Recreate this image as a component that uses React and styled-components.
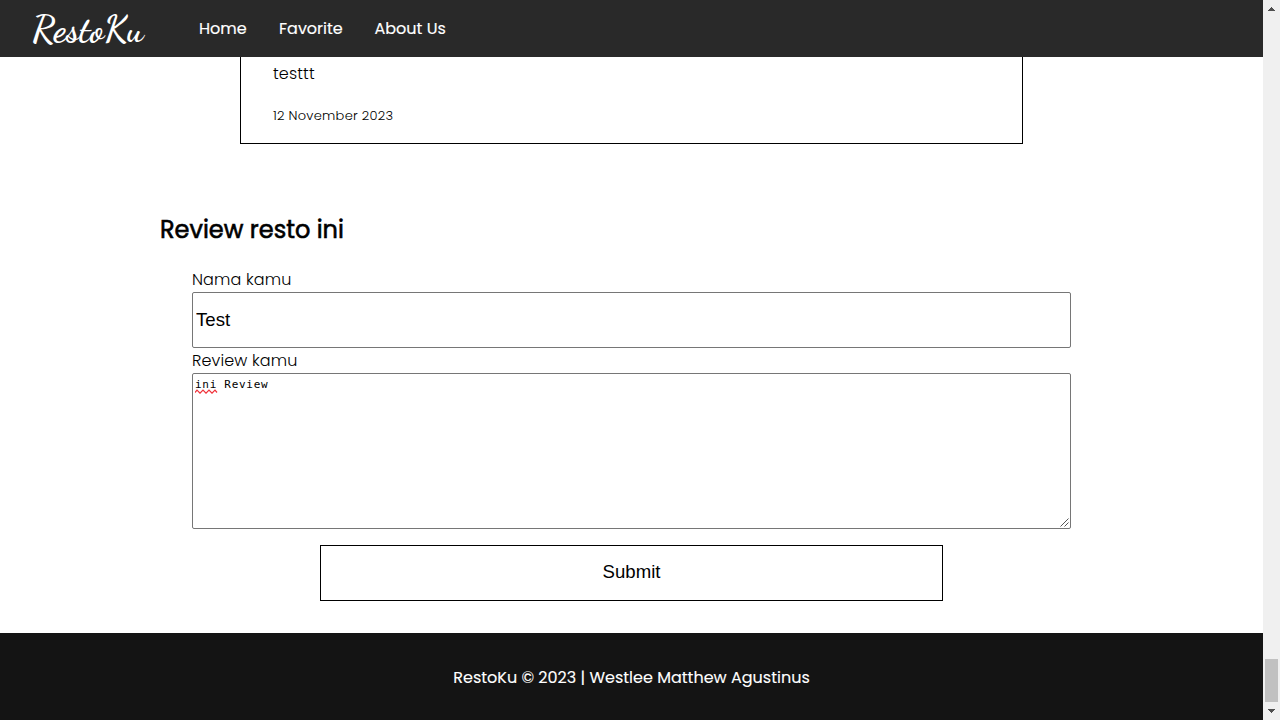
import React from 'react';
import styled, { createGlobalStyle } from 'styled-components';

const GlobalStyle = createGlobalStyle`
  * { box-sizing: border-box; }
  body {
    margin: 0;
    background: #fff;
    color: #000;
    font-family: Poppins, Inter, sans-serif;
    font-size: 16px;
    line-height: 24px;
    overflow: hidden;
  }
`;

const Window = styled.div`
  display: flex;
  width: 1280px;
  height: 720px;
  overflow: hidden;
`;

const Page = styled.div`
  display: flex;
  flex-direction: column;
  width: 1263px;
  height: 720px;
`;

const Header = styled.header`
  display: flex;
  align-items: center;
  flex: none;
  height: 57px;
  padding-left: 32px;
  background: #292929;
  color: #fff;
`;

const Logo = styled.div`
  width: 167px;
  font-family: 'Dancing Script', 'Liberation Serif', serif;
  font-weight: 700;
  font-size: 37px;
  line-height: 56px;
  white-space: nowrap;
`;

const Nav = styled.nav`
  display: flex;
`;

const NavLink = styled.a`
  width: ${(p) => p.$width}px;
  font-weight: 400;
  -webkit-text-stroke: 0.15px currentColor;
  white-space: nowrap;
`;

const Main = styled.main`
  flex: 1;
  min-height: 0;
`;

const ReviewCard = styled.article`
  width: 783px;
  height: 87px;
  margin-left: 240px;
  padding: 5px 32px 0;
  border: 1px solid #000;
  border-top: 0;
`;

const ReviewText = styled.p`
  margin: 0;
  font-weight: 300;
  letter-spacing: 0.15px;
`;

const ReviewDate = styled.p`
  margin: 20px 0 0;
  font-size: 13px;
  line-height: 20px;
  font-weight: 300;
  letter-spacing: 0.26px;
`;

const Title = styled.h2`
  margin: 68px 0 0 160px;
  font-size: 24px;
  line-height: 36px;
  font-weight: 400;
  -webkit-text-stroke: 0.6px currentColor;
`;

const Form = styled.form`
  display: flex;
  flex-direction: column;
  margin: 20px 192px 0;
`;

const Label = styled.label`
  height: 24px;
  font-weight: 300;
  letter-spacing: 0.13px;
`;

const NameInput = styled.input`
  height: 56px;
  margin: 0 0 1px;
  padding: 1px 3px;
  border: 1px solid #767676;
  border-radius: 2px;
  outline: 0;
  color: #000;
  font: 18.6px 'Liberation Sans', Arial, sans-serif;
`;

const ReviewField = styled.div`
  position: relative;
  display: flex;
  height: 156px;
`;

const ReviewInput = styled.textarea`
  flex: 1;
  padding: 3px 2px 2px;
  border: 1px solid #767676;
  border-radius: 2px;
  outline: 0;
  resize: none;
  color: #000;
  font: 11px/15px 'DejaVu Sans Mono', monospace;
  letter-spacing: 0.71px;
`;

const Squiggle = styled.svg`
  position: absolute;
  left: 3px;
  top: 16px;
`;

const Grip = styled.svg`
  position: absolute;
  right: 1px;
  bottom: 1px;
`;

const SubmitButton = styled.button`
  width: 623px;
  height: 56px;
  margin: 16px auto 0;
  padding: 0 0 2px;
  border: 1px solid #000;
  background: #fff;
  color: #000;
  font: 18.6px 'Liberation Sans', Arial, sans-serif;
`;

const Footer = styled.footer`
  display: flex;
  flex: none;
  align-items: center;
  justify-content: center;
  height: 87px;
  padding-top: 2px;
  background: #141414;
  color: #fff;
  font-weight: 400;
  -webkit-text-stroke: 0.12px currentColor;
`;

const Scrollbar = styled.div`
  display: flex;
  flex-direction: column;
  align-items: center;
  justify-content: space-between;
  width: 17px;
  height: 720px;
  background: #f0f0f0;
`;

const ScrollEnd = styled.div`
  display: flex;
  flex-direction: column;
`;

const Thumb = styled.div`
  width: 13px;
  height: 43px;
  margin-left: 2px;
  background: #c1c1c1;
`;

export default function App() {
  return (
    <Window>
      <GlobalStyle />
      <Page>
        <Header>
          <Logo>RestoKu</Logo>
          <Nav>
            <NavLink $width={80}>Home</NavLink>
            <NavLink $width={95.5}>Favorite</NavLink>
            <NavLink $width={80}>About Us</NavLink>
          </Nav>
        </Header>
        <Main>
          <ReviewCard>
            <ReviewText>testtt</ReviewText>
            <ReviewDate>12 November 2023</ReviewDate>
          </ReviewCard>
          <Title>Review resto ini</Title>
          <Form onSubmit={(e) => e.preventDefault()}>
            <Label htmlFor="name">Nama kamu</Label>
            <NameInput id="name" defaultValue="Test" />
            <Label htmlFor="review">Review kamu</Label>
            <ReviewField>
              <ReviewInput id="review" spellCheck={false} defaultValue="ini Review" />
              <Squiggle width="23" height="5" fill="none" stroke="#f03038" strokeWidth="1.2">
                <path d="M0 3.5 L2 1.2 L5 4.2 L8 1.2 L11 4.2 L14 1.2 L17 4.2 L20 1.2 L22 3.5" />
              </Squiggle>
              <Grip width="11" height="11" stroke="#555" strokeWidth="1">
                <path d="M1.5 9.5 L9.5 1.5 M5.5 9.5 L9.5 5.5" />
              </Grip>
            </ReviewField>
            <SubmitButton>Submit</SubmitButton>
          </Form>
        </Main>
        <Footer>RestoKu © 2023 | Westlee Matthew Agustinus</Footer>
      </Page>
      <Scrollbar>
        <svg width="17" height="17" fill="#505050" shapeRendering="crispEdges">
          <path d="M8 7h1v1h1v1h1v1h1v1H5v-1h1V9h1V8h1z" />
        </svg>
        <ScrollEnd>
          <Thumb />
          <svg width="17" height="18" fill="#505050" shapeRendering="crispEdges">
            <path d="M5 7h7v1h-1v1h-1v1H9v1H8v-1H7V9H6V8H5z" />
          </svg>
        </ScrollEnd>
      </Scrollbar>
    </Window>
  );
}
